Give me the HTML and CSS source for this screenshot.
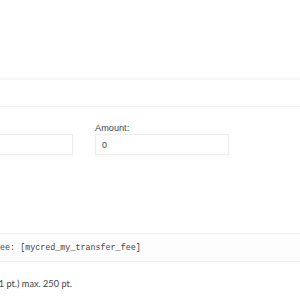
FILE: index.html
```html
<!DOCTYPE html>
<html lang="en">
<head>
    <meta charset="UTF-8">
    <title>Transfer Settings</title>
    <link rel="stylesheet" href="styles.css">
</head>
<body>
    <div class="top"></div>
    <div class="bar"></div>

    <div class="page">
        <div class="fields">
            <div class="field">
                <label class="field-label">To:</label>
                <input class="field-input" type="text" value="">
            </div>
            <div class="field">
                <label class="field-label">Amount:</label>
                <input class="field-input" type="text" value="0">
            </div>
        </div>
    </div>

    <div class="code-row">
        <code>Fee: [mycred_my_transfer_fee]</code>
    </div>

    <p class="note">(min. 1 pt.) max. 250 pt.</p>
</body>
</html>
```

FILE: styles.css
```css
* {
    margin: 0;
    padding: 0;
    box-sizing: border-box;
}

body {
    width: 300px;
    height: 300px;
    overflow: hidden;
    background: #fff;
    color: #444;
    font-family: 'Liberation Sans', Arial, sans-serif;
}

.top {
    height: 78px;
}

.bar {
    height: 29px;
    border-top: 2px solid #f5f5f5;
    border-bottom: 1px solid #f3f3f3;
}

.page {
    margin-left: -61px;
    padding-top: 16px;
}

.fields {
    display: flex;
    gap: 22px;
}

.field {
    width: 134px;
}

.field-label {
    display: block;
    height: 11px;
    font-size: 9.2px;
    line-height: 10px;
    color: #444;
}

.field:first-child .field-label {
    visibility: hidden;
}

.field-input {
    display: block;
    width: 134px;
    height: 21px;
    border: 1px solid #eee;
    box-shadow: 0 1px 2px rgba(0, 0, 0, 0.04);
    padding: 0 6px;
    font-family: 'Liberation Sans', Arial, sans-serif;
    font-size: 9px;
    color: #444;
    background: #fff;
    outline: none;
}

.code-row {
    margin-top: 78px;
    height: 29px;
    display: flex;
    align-items: center;
    border-top: 1px solid #f0f0f0;
    border-bottom: 1px solid #f0f0f0;
    background: #fdfdfd;
}

.code-row code {
    margin-left: -5px;
    font-family: 'Liberation Mono', 'Courier New', monospace;
    font-size: 8.4px;
    color: #444;
    white-space: nowrap;
}

.note {
    margin-top: 17px;
    margin-left: -23px;
    font-family: Lato, 'Open Sans', sans-serif;
    font-size: 9.2px;
    line-height: 10px;
    color: #444;
    white-space: nowrap;
}
```
